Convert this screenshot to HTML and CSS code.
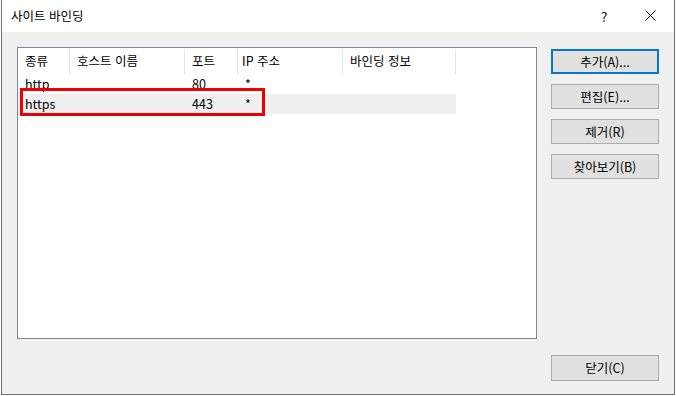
FILE: index.html
```html
<!DOCTYPE html>
<html lang="ko">
<head>
<meta charset="utf-8">
<link rel="stylesheet" href="styles.css">
</head>
<body>
<div class="window">
  <div class="titlebar">
    <span class="title">사이트 바인딩</span>
    <span class="help">?</span>
    <span class="close">
      <svg width="11" height="11" viewBox="0 0 11 11"><path d="M0.5 0.5 L10.5 10.5 M10.5 0.5 L0.5 10.5" stroke="#000" stroke-width="1" fill="none"/></svg>
    </span>
  </div>
  <div class="content">
    <div class="listbox">
      <div class="row header">
        <div class="cell c1">종류</div>
        <div class="cell c2">호스트 이름</div>
        <div class="cell c3">포트</div>
        <div class="cell c4 ip">IP 주소</div>
        <div class="cell c5">바인딩 정보</div>
      </div>
      <div class="row">
        <div class="cell c1">http</div>
        <div class="cell c2"></div>
        <div class="cell c3">80</div>
        <div class="cell c4">*</div>
        <div class="cell c5"></div>
      </div>
      <div class="row selected">
        <div class="cell c1">https</div>
        <div class="cell c2"></div>
        <div class="cell c3">443</div>
        <div class="cell c4">*</div>
        <div class="cell c5"></div>
      </div>
      <div class="highlight"></div>
    </div>
    <div class="buttons">
      <div class="btn default">추가(A)...</div>
      <div class="btn">편집(E)...</div>
      <div class="btn">제거(R)</div>
      <div class="btn">찾아보기(B)</div>
      <div class="btn closebtn">닫기(C)</div>
    </div>
  </div>
</div>
</body>
</html>
```

FILE: styles.css
```css
html, body {
  margin: 0;
  padding: 0;
  background: #ffffff;
  width: 676px;
  height: 396px;
  overflow: hidden;
}
body {
  font-family: "Noto Sans CJK KR", "Noto Sans", sans-serif;
  font-size: 12.5px;
  color: #000;
}
.window {
  margin-left: 1px;
  width: 672px;
  height: 394px;
  border: 1px solid #707070;
  border-top: none;
  background: #f0f0f0;
  display: flex;
  flex-direction: column;
}
.titlebar {
  height: 32px;
  background: #ffffff;
  display: flex;
  align-items: center;
  padding-left: 9px;
  box-sizing: border-box;
}
.title {
  font-size: 12.5px;
  line-height: 16px;
  margin-top: -1px;
  flex: 1;
}
.help {
  font-size: 13.5px;
  line-height: 16px;
  margin-top: -1px;
  width: 44px;
}
.close {
  width: 29px;
  display: flex;
  align-items: center;
  margin-top: -1px;
}
.content {
  flex: 1;
  display: flex;
  padding: 15px 15px 13px 15px;
  gap: 14px;
}
.listbox {
  position: relative;
  width: 518px;
  height: 290px;
  border: 1px solid #828790;
  background: #ffffff;
}
.row {
  display: flex;
  height: 20px;
  line-height: 20px;
}
.row.header {
  height: 26px;
  line-height: 26px;
}
.row.header .cell {
  border-right: 1px solid #e5e5e5;
  height: 25px;
  margin-top: 1px;
  line-height: 24px;
}
.cell {
  box-sizing: border-box;
  padding-left: 7px;
  white-space: nowrap;
}
.c1 { width: 52px; }
.c2 { width: 115px; }
.c3 { width: 53px; }
.c4 { width: 105px; }
.c5 { width: 113px; }
.row .c4 { padding-left: 7px; }
.row.header .c4.ip { padding-left: 4px; }
.row.selected .cell { background: #f0f0f0; }
.highlight {
  position: absolute;
  left: 2px;
  top: 40px;
  width: 245px;
  height: 28px;
  border: 3px solid #ee0000;
  box-sizing: border-box;
}
.buttons {
  display: flex;
  flex-direction: column;
  gap: 10px;
  padding-top: 2px;
  width: 108px;
}
.btn {
  height: 25px;
  box-sizing: border-box;
  border: 1px solid #adadad;
  background: #e1e1e1;
  display: flex;
  align-items: center;
  justify-content: center;
  line-height: 16px;
}
.btn.default {
  border: 2px solid #0078d7;
}
.closebtn {
  margin-top: auto;
  height: 26px;
}
```
